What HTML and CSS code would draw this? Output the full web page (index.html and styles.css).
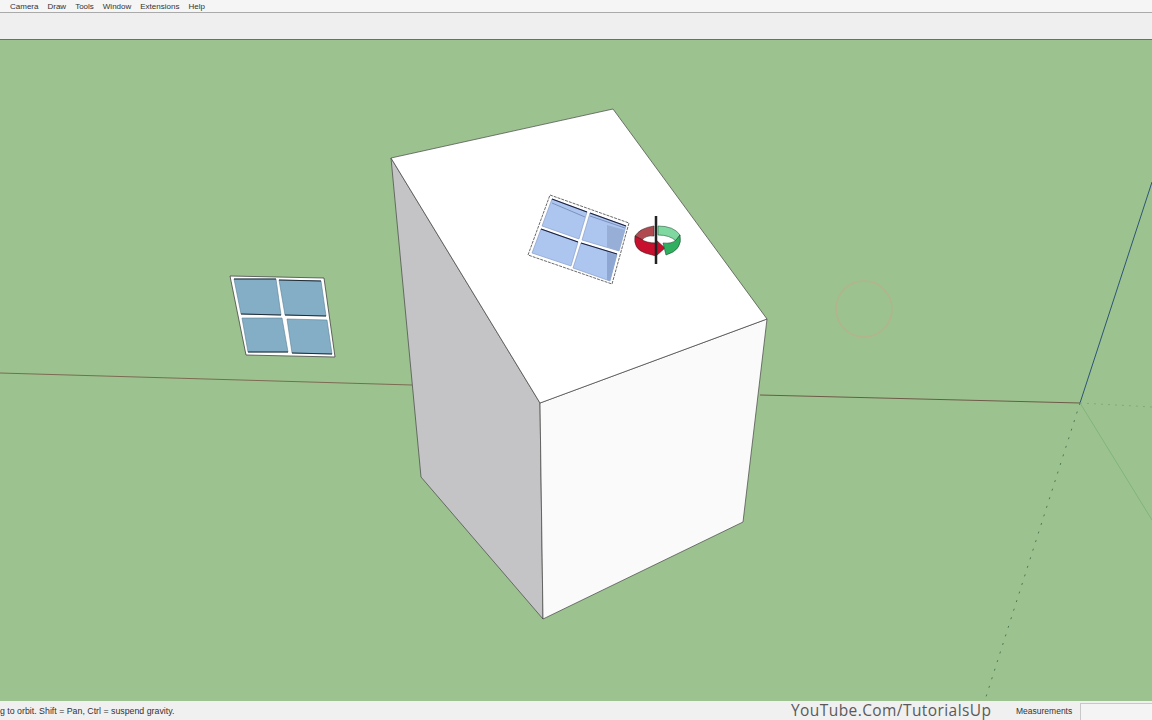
FILE: index.html
```html
<!DOCTYPE html>
<html lang="en">
<head>
    <meta charset="UTF-8" />
    <title>SketchUp</title>
    <link rel="stylesheet" href="styles.css">
</head>
<body>
    <!-- Menu -->
    <div class="menubar">
        <span>Camera</span>
        <span>Draw</span>
        <span>Tools</span>
        <span>Window</span>
        <span>Extensions</span>
        <span>Help</span>
    </div>
    <div class="toolbar"></div>

    <!-- Model -->
    <svg class="viewport" viewBox="0 40 1152 661" preserveAspectRatio="none">
        <!-- axes -->
        <line x1="0" y1="373" x2="412" y2="385" stroke="#7c6a52" stroke-width="1" />
        <line x1="760" y1="395" x2="1080" y2="403" stroke="#6e5a48" stroke-width="1" />
        <line x1="1080" y1="403" x2="1152" y2="182" stroke="#2b5478" stroke-width="1" />
        <line x1="1080" y1="403" x2="1152" y2="520" stroke="#7fb47f" stroke-width="1" />
        <line x1="1080" y1="403" x2="985" y2="700" stroke="#4c7a58" stroke-width="1" stroke-dasharray="2 7" />
        <line x1="1080" y1="403" x2="1152" y2="407" stroke="#86a878" stroke-width="1" stroke-dasharray="2 5" />

        <!-- box -->
        <polygon points="391,158 540,403 543,619 421,477" fill="#c4c4c6" stroke="#444" stroke-width=".7" />
        <polygon points="540,403 767,319 743,522 543,619" fill="#fafafa" stroke="#444" stroke-width=".7" />
        <polygon points="391,158 613,109 767,319 540,403" fill="#fff" stroke="#444" stroke-width=".7" />

        <!-- window on the ground -->
        <polygon points="230,276 324,278 335,357 246,355" fill="#fff" stroke="#444" stroke-width=".8" />
        <g fill="#83aec6" stroke="#5a7f94" stroke-width=".6">
            <polygon points="234,279 276,279 281,315 241,314" />
            <polygon points="279,280 321,281 326,316 285,315" />
            <polygon points="242,318 282,318 288,352 248,352" />
            <polygon points="287,319 327,320 332,354 292,353" />
        </g>
        <g stroke="#1f2c36" stroke-width="1">
            <line x1="234" y1="279" x2="276" y2="279" />
            <line x1="279" y1="280" x2="321" y2="281" />
            <line x1="241" y1="314" x2="281" y2="315" />
            <line x1="285" y1="315" x2="326" y2="316" />
            <line x1="248" y1="352" x2="288" y2="352" />
            <line x1="292" y1="353" x2="332" y2="354" />
        </g>

        <!-- window on the roof -->
        <polygon points="550,195 629,223 612,284 528,255" fill="#fff" stroke="#444" stroke-width=".8" stroke-dasharray="3 1" />
        <g fill="#adc6f0" stroke="#7d93bf" stroke-width=".6">
            <polygon points="552,199 587,212 579,239 542,226" />
            <polygon points="590,213 626,226 619,251 582,240" />
            <polygon points="541,229 578,242 571,266 532,253" />
            <polygon points="581,243 617,254 610,281 573,268" />
        </g>
        <polygon points="607,225 625,230 619,251 607,247" fill="#97aed6" />
        <polygon points="607,252 617,255 610,281 607,280" fill="#8ea6d2" />
        <polyline points="552,203 585,217" fill="none" stroke="#6f83ad" stroke-width=".8" />
        <polyline points="590,216 625,228" fill="none" stroke="#6f83ad" stroke-width=".8" />
        <g stroke="#1b2140" stroke-width="1.3">
            <line x1="552" y1="199" x2="587" y2="212" />
            <line x1="590" y1="213" x2="626" y2="226" />
            <line x1="541" y1="229" x2="578" y2="242" />
            <line x1="581" y1="243" x2="617" y2="254" />
        </g>

        <!-- orbit cursor -->
        <g class="orbit">
            <path d="M635 236 Q640 228 654 226 L654 236 Q646 235 642 240 Z" fill="#b04a50" stroke="#3a2a2a" stroke-width=".6" />
            <path d="M658 226 Q674 226 680 235 L676 241 Q670 235 658 235 Z" fill="#7fd8a0" stroke="#2f5a40" stroke-width=".6" />
            <path d="M635 236 Q633 249 645 253 L656 256 L665 248 L656 240 L656 243 Q646 243 641 239 Z" fill="#c8102e" stroke="#3a1a1a" stroke-width=".6" />
            <path d="M680 235 Q683 250 666 255 L663 243 Q672 244 676 240 Z" fill="#2faf5f" stroke="#1f4a30" stroke-width=".6" />
            <line x1="656" y1="216" x2="656" y2="264" stroke="#222" stroke-width="2.5" />
        </g>

        <!-- faint circle on the ground -->
        <circle cx="864" cy="309" r="28" fill="none" stroke="#b3b38c" stroke-width="1.6" />
    </svg>

    <!-- Status -->
    <div class="statusbar">
        <span class="hint">g to orbit. Shift = Pan, Ctrl = suspend gravity.</span>
        <span class="channel">YouTube.Com/TutorialsUp</span>
        <span class="measure-label">Measurements</span>
        <div class="measure-box"></div>
    </div>
</body>
</html>
```

FILE: styles.css
```css
* {
    margin: 0;
    padding: 0;
    box-sizing: border-box;
}

html, body {
    height: 100%;
    overflow: hidden;
}

body {
    display: flex;
    flex-direction: column;
    font-family: "Liberation Sans", Arial, sans-serif;
    background: #f0f0f0;
    color: #333;
}

.menubar {
    flex: none;
    height: 13px;
    display: flex;
    align-items: center;
    gap: 9px;
    padding-left: 10px;
    padding-top: 1px;
    font-size: 8px;
    background: #f5f5f5;
    border-bottom: 1px solid #aaa;
}

.toolbar {
    flex: none;
    height: 27px;
    background: #efefef;
    border-bottom: 1px solid #6d6d6d;
}

.viewport {
    flex: none;
    display: block;
    width: 100%;
    height: 661px;
    background: #9cc38f;
    filter: blur(0.35px);
}

.statusbar {
    flex: none;
    height: 19px;
    display: flex;
    align-items: center;
    padding-top: 2px;
    background: #f0f0f0;
    font-size: 8.8px;
    line-height: 1;
    white-space: nowrap;
}

.hint {
    width: 791px;
}

.channel {
    width: 225px;
    margin-top: -2px;
    font-family: "Open Sans", sans-serif;
    font-size: 15.5px;
    letter-spacing: 0.42px;
    color: #5a5a5a;
}

.measure-label {
    width: 64px;
    font-size: 8.5px;
}

.measure-box {
    flex: 1;
    height: 100%;
    background: #f4f4f4;
    border-left: 1px solid #c8c8c8;
    border-top: 1px solid #c8c8c8;
}
```
